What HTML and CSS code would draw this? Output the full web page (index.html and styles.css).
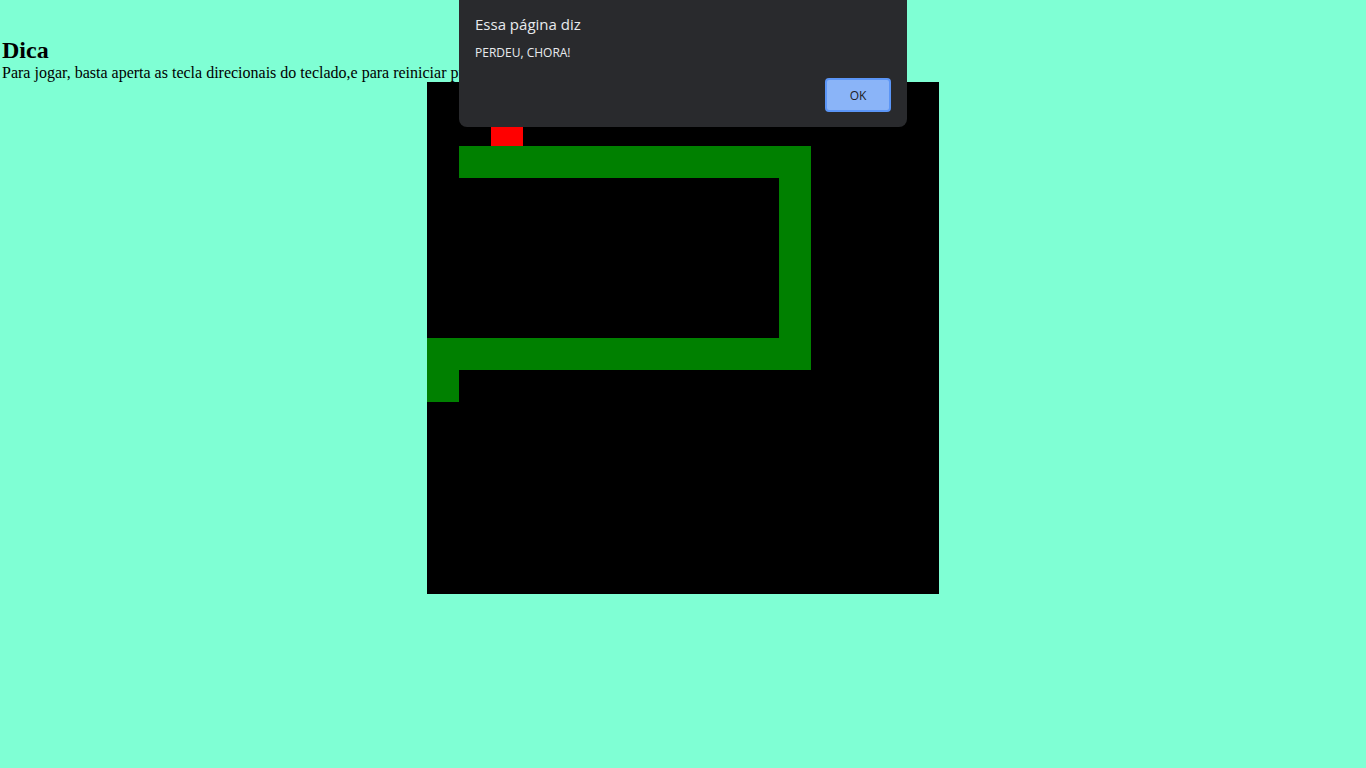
FILE: index.html
```html
<!DOCTYPE html>
<html lang="pt-BR">
<head>
<meta charset="utf-8">
<title>Snake</title>
<link rel="stylesheet" href="styles.css">
</head>
<body>
  <h2 class="title">Dica</h2>
  <p class="tip">Para jogar, basta aperta as tecla direcionais do teclado,e para reiniciar pressione F5.</p>
  <svg class="board" width="512" height="512" viewBox="0 0 512 512" aria-label="Jogo da cobrinha">
    <rect x="0" y="0" width="512" height="512" fill="#000"/>
    <rect x="64" y="32" width="32" height="32" fill="#ff0000"/>
    <rect x="32" y="64" width="352" height="32" fill="#008000"/>
    <rect x="352" y="64" width="32" height="224" fill="#008000"/>
    <rect x="0" y="256" width="384" height="32" fill="#008000"/>
    <rect x="0" y="288" width="32" height="32" fill="#008000"/>
  </svg>
  <div class="alert" role="alertdialog">
    <div class="alert-title">Essa página diz</div>
    <div class="alert-msg">PERDEU, CHORA!</div>
    <div class="alert-actions">
      <button class="alert-ok">OK</button>
    </div>
  </div>
</body>
</html>
```
FILE: styles.css
```css
html, body {
  margin: 0;
  padding: 0;
}
body {
  background: #7fffd4;
  font-family: "Liberation Serif", "Times New Roman", serif;
  color: #000;
  padding-left: 2px;
  min-height: 768px;
}
.title {
  font-size: 24px;
  font-weight: bold;
  margin: 37px 0 0 0;
  line-height: normal;
}
.tip {
  font-size: 16px;
  margin: 0;
  line-height: normal;
}
.board {
  display: block;
  margin: 0 auto;
  position: relative;
  left: -1px;
}
.alert {
  position: absolute;
  top: 0;
  left: 459px;
  width: 448px;
  height: 127px;
  box-sizing: border-box;
  padding: 14px 16px 15px 16px;
  background: #292a2d;
  border-radius: 0 0 8px 8px;
  color: #e8eaed;
  font-family: "Open Sans", "Noto Sans", sans-serif;
  display: flex;
  flex-direction: column;
}
.alert-title {
  font-size: 15px;
  line-height: 20px;
}
.alert-msg {
  font-size: 12px;
  line-height: 16px;
  margin-top: 11px;
}
.alert-actions {
  margin-top: auto;
  display: flex;
  justify-content: flex-end;
}
.alert-ok {
  width: 66px;
  height: 34px;
  box-sizing: border-box;
  border: 2px solid #5b95f6;
  border-radius: 4px;
  background: #8ab4f8;
  color: #202124;
  font-family: "Open Sans", "Noto Sans", sans-serif;
  font-size: 12px;
  padding: 0;
}
```
